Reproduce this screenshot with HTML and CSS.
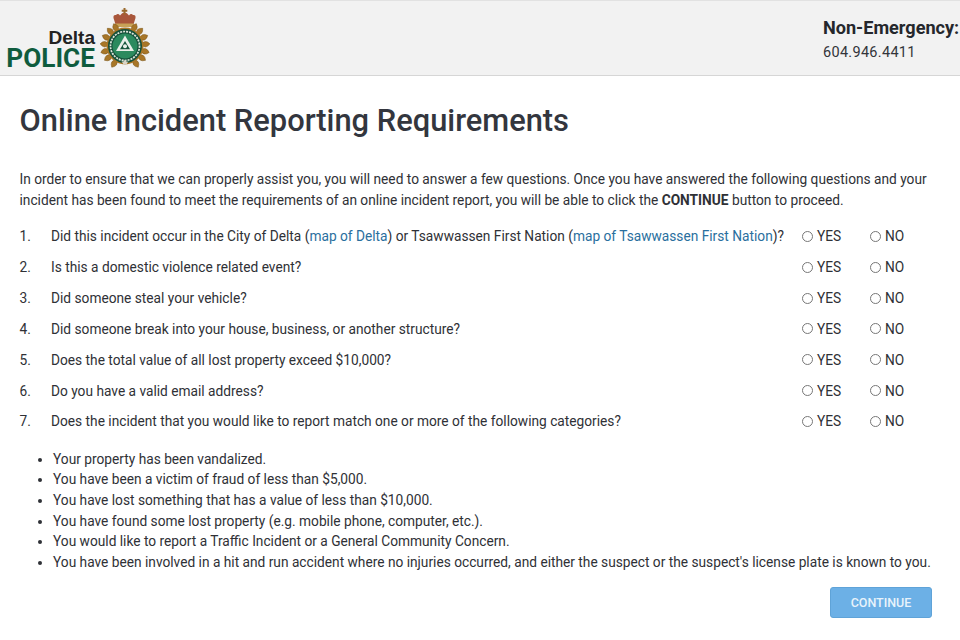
FILE: index.html
```html
<!DOCTYPE html>
<html lang="en">
<head>
<meta charset="utf-8">
<title>Online Incident Reporting Requirements</title>
<link rel="stylesheet" href="styles.css">
</head>
<body>
<header class="header">
  <div class="logo">
    <div class="wordmark">
      <span class="delta">Delta</span>
      <span class="police">POLICE</span>
    </div>
    <svg class="crest" width="50" height="62" viewBox="0 0 50 62">
      <defs>
        <path id="leaf" d="M25 22 Q30.500 17.500 25 13 Q19.500 17.500 25 22 Z" fill="#a87628" stroke="#7a5518" stroke-width=".5"/>
      </defs>
      <path d="M16 18 L13.500 10 Q13 6.500 16 7 Q18 5 20 7.500 Q22 4.500 24.500 4.500 Q27 4.500 29 7.500 Q31 5 33 7 Q36 6.500 35.500 10 L33 18 Z" fill="#a9573b"/>
      <path d="M23.500 0 h2 v1.800 h1.800 v2 h-1.800 v3 h-2 v-3 h-1.800 v-2 h1.800 Z" fill="#9a6a2d"/>
      <rect x="15" y="15.500" width="19" height="3.500" rx="1" fill="#c8a257"/>
      <g>
        <use href="#leaf" transform="rotate(-148 25 38)"/>
        <use href="#leaf" transform="rotate(-125 25 38)"/>
        <use href="#leaf" transform="rotate(-105 25 38)"/>
        <use href="#leaf" transform="rotate(-85 25 38)"/>
        <use href="#leaf" transform="rotate(-65 25 38)"/>
        <use href="#leaf" transform="rotate(-45 25 38)"/>
        <use href="#leaf" transform="rotate(-27 25 38)"/>
        <use href="#leaf" transform="rotate(27 25 38)"/>
        <use href="#leaf" transform="rotate(45 25 38)"/>
        <use href="#leaf" transform="rotate(65 25 38)"/>
        <use href="#leaf" transform="rotate(85 25 38)"/>
        <use href="#leaf" transform="rotate(105 25 38)"/>
        <use href="#leaf" transform="rotate(125 25 38)"/>
        <use href="#leaf" transform="rotate(148 25 38)"/>
      </g>
      <circle cx="25" cy="38" r="18.500" fill="#a87628"/>
      <circle cx="25" cy="38" r="17" fill="#15503a"/>
      <circle cx="25" cy="38" r="14.500" fill="none" stroke="#dfe7dc" stroke-width="1.700" stroke-dasharray="2 1"/>
      <circle cx="25" cy="38" r="12.500" fill="#2b8a5e"/>
      <path d="M25 27.500 L34 43 H16 Z" fill="#eaf0ea"/>
      <path d="M25 33 L30 41.200 H20 Z" fill="#15543a"/>
      <circle cx="25" cy="38.300" r="2" fill="#eaf0ea"/>
      <path d="M25 51.500 l1.300 2 l2.400 .2 l-1.900 1.500 l.8 2.300 l-2.600 -1.200 l-2.600 1.200 l.8 -2.300 l-1.900 -1.500 l2.400 -.2 Z" fill="#d8d4c6"/>
    </svg>
  </div>
  <div class="contact">
    <div class="contact-label">Non-Emergency:</div>
    <div class="contact-phone">604.946.4411</div>
  </div>
</header>
<main class="content">
  <h1 class="title">Online Incident Reporting Requirements</h1>
  <p class="intro">In order to ensure that we can properly assist you, you will need to answer a few questions. Once you have answered the following questions and your incident has been found to meet the requirements of an online incident report, you will be able to click the <strong>CONTINUE</strong> button to proceed.</p>
  <ol class="questions">
    <li class="question"><span class="num">1.</span><span class="q">Did this incident occur in the City of Delta (<a href="#">map of Delta</a>) or Tsawwassen First Nation (<a href="#">map of Tsawwassen First Nation</a>)?</span><span class="opts"><label class="opt opt-yes"><i class="radio"></i>YES</label><label class="opt"><i class="radio"></i>NO</label></span></li>
    <li class="question"><span class="num">2.</span><span class="q">Is this a domestic violence related event?</span><span class="opts"><label class="opt opt-yes"><i class="radio"></i>YES</label><label class="opt"><i class="radio"></i>NO</label></span></li>
    <li class="question"><span class="num">3.</span><span class="q">Did someone steal your vehicle?</span><span class="opts"><label class="opt opt-yes"><i class="radio"></i>YES</label><label class="opt"><i class="radio"></i>NO</label></span></li>
    <li class="question"><span class="num">4.</span><span class="q">Did someone break into your house, business, or another structure?</span><span class="opts"><label class="opt opt-yes"><i class="radio"></i>YES</label><label class="opt"><i class="radio"></i>NO</label></span></li>
    <li class="question"><span class="num">5.</span><span class="q">Does the total value of all lost property exceed $10,000?</span><span class="opts"><label class="opt opt-yes"><i class="radio"></i>YES</label><label class="opt"><i class="radio"></i>NO</label></span></li>
    <li class="question"><span class="num">6.</span><span class="q">Do you have a valid email address?</span><span class="opts"><label class="opt opt-yes"><i class="radio"></i>YES</label><label class="opt"><i class="radio"></i>NO</label></span></li>
    <li class="question"><span class="num">7.</span><span class="q">Does the incident that you would like to report match one or more of the following categories?</span><span class="opts"><label class="opt opt-yes"><i class="radio"></i>YES</label><label class="opt"><i class="radio"></i>NO</label></span></li>
  </ol>
  <ul class="categories">
    <li>Your property has been vandalized.</li>
    <li>You have been a victim of fraud of less than $5,000.</li>
    <li>You have lost something that has a value of less than $10,000.</li>
    <li>You have found some lost property (e.g. mobile phone, computer, etc.).</li>
    <li>You would like to report a Traffic Incident or a General Community Concern.</li>
    <li>You have been involved in a hit and run accident where no injuries occurred, and either the suspect or the suspect's license plate is known to you.</li>
  </ul>
  <div class="actions"><button class="continue" type="button">CONTINUE</button></div>
</main>
</body>
</html>
```
FILE: styles.css
```css
* { box-sizing: border-box; }
html, body { margin: 0; padding: 0; }
body {
  width: 960px;
  height: 640px;
  overflow: hidden;
  background: #fff;
  color: #2f3136;
  font-family: Roboto, "Liberation Sans", sans-serif;
  font-size: 13.72px;
}
.header {
  height: 76px;
  background: #f2f2f2;
  border-top: 1px solid #e2e2e2;
  border-bottom: 1px solid #d6d6d6;
  display: flex;
  justify-content: space-between;
  padding: 7px 0 0 6px;
}
.logo { display: flex; align-items: flex-start; gap: 5px; }
.wordmark { display: flex; flex-direction: column; align-items: flex-end; padding-top: 20px; width: 89px; }
.delta { font-size: 19px; font-weight: 700; line-height: 19px; color: #222; font-family: "Liberation Sans", sans-serif; }
.police { font-size: 26.200px; font-weight: 700; line-height: 22px; color: #0f5c3e; }
.crest { display: block; }
.contact { width: 137px; padding-top: 9px; }
.contact-label { font-size: 18.100px; font-weight: 700; line-height: 21px; white-space: nowrap; color: #25272c; }
.contact-phone { font-size: 14.500px; line-height: 20px; margin-top: 5px; letter-spacing: .3px; color: #33353a; }
.content { padding: 0 28px 0 19.5px; }
.title { margin: 25px 0 0; font-size: 30.850px; line-height: 40px; font-weight: 500; color: #33363e; }
.intro { margin: 28px 0 0; line-height: 21px; }
.intro strong { font-weight: 700; }
.questions { list-style: none; margin: 10px 0 0; padding: 0; }
.question { display: flex; align-items: center; height: 30.830px; }
.num { width: 31.500px; }
.q { flex: 1; white-space: nowrap; }
.q a { color: #2a6f9e; text-decoration: none; }
.opts { display: flex; width: 130px; flex: none; }
.opt { display: flex; align-items: center; gap: 4px; }
.opt-yes { width: 68px; }
.radio { width: 11px; height: 11px; border: 1px solid #777; border-radius: 50%; background: #fff; display: block; }
.categories { margin: 12px 0 0; padding: 0 0 0 33.500px; line-height: 20.600px; white-space: nowrap; }
.actions { display: flex; justify-content: flex-end; margin-top: 15px; }
.continue {
  width: 102px;
  height: 31px;
  border: 1px solid #5fa3d8;
  border-radius: 3px;
  background: #6cb0e6;
  color: #e8f3fb;
  font-family: inherit;
  font-size: 12.500px;
  font-weight: 500;
  padding: 0;
}
```
